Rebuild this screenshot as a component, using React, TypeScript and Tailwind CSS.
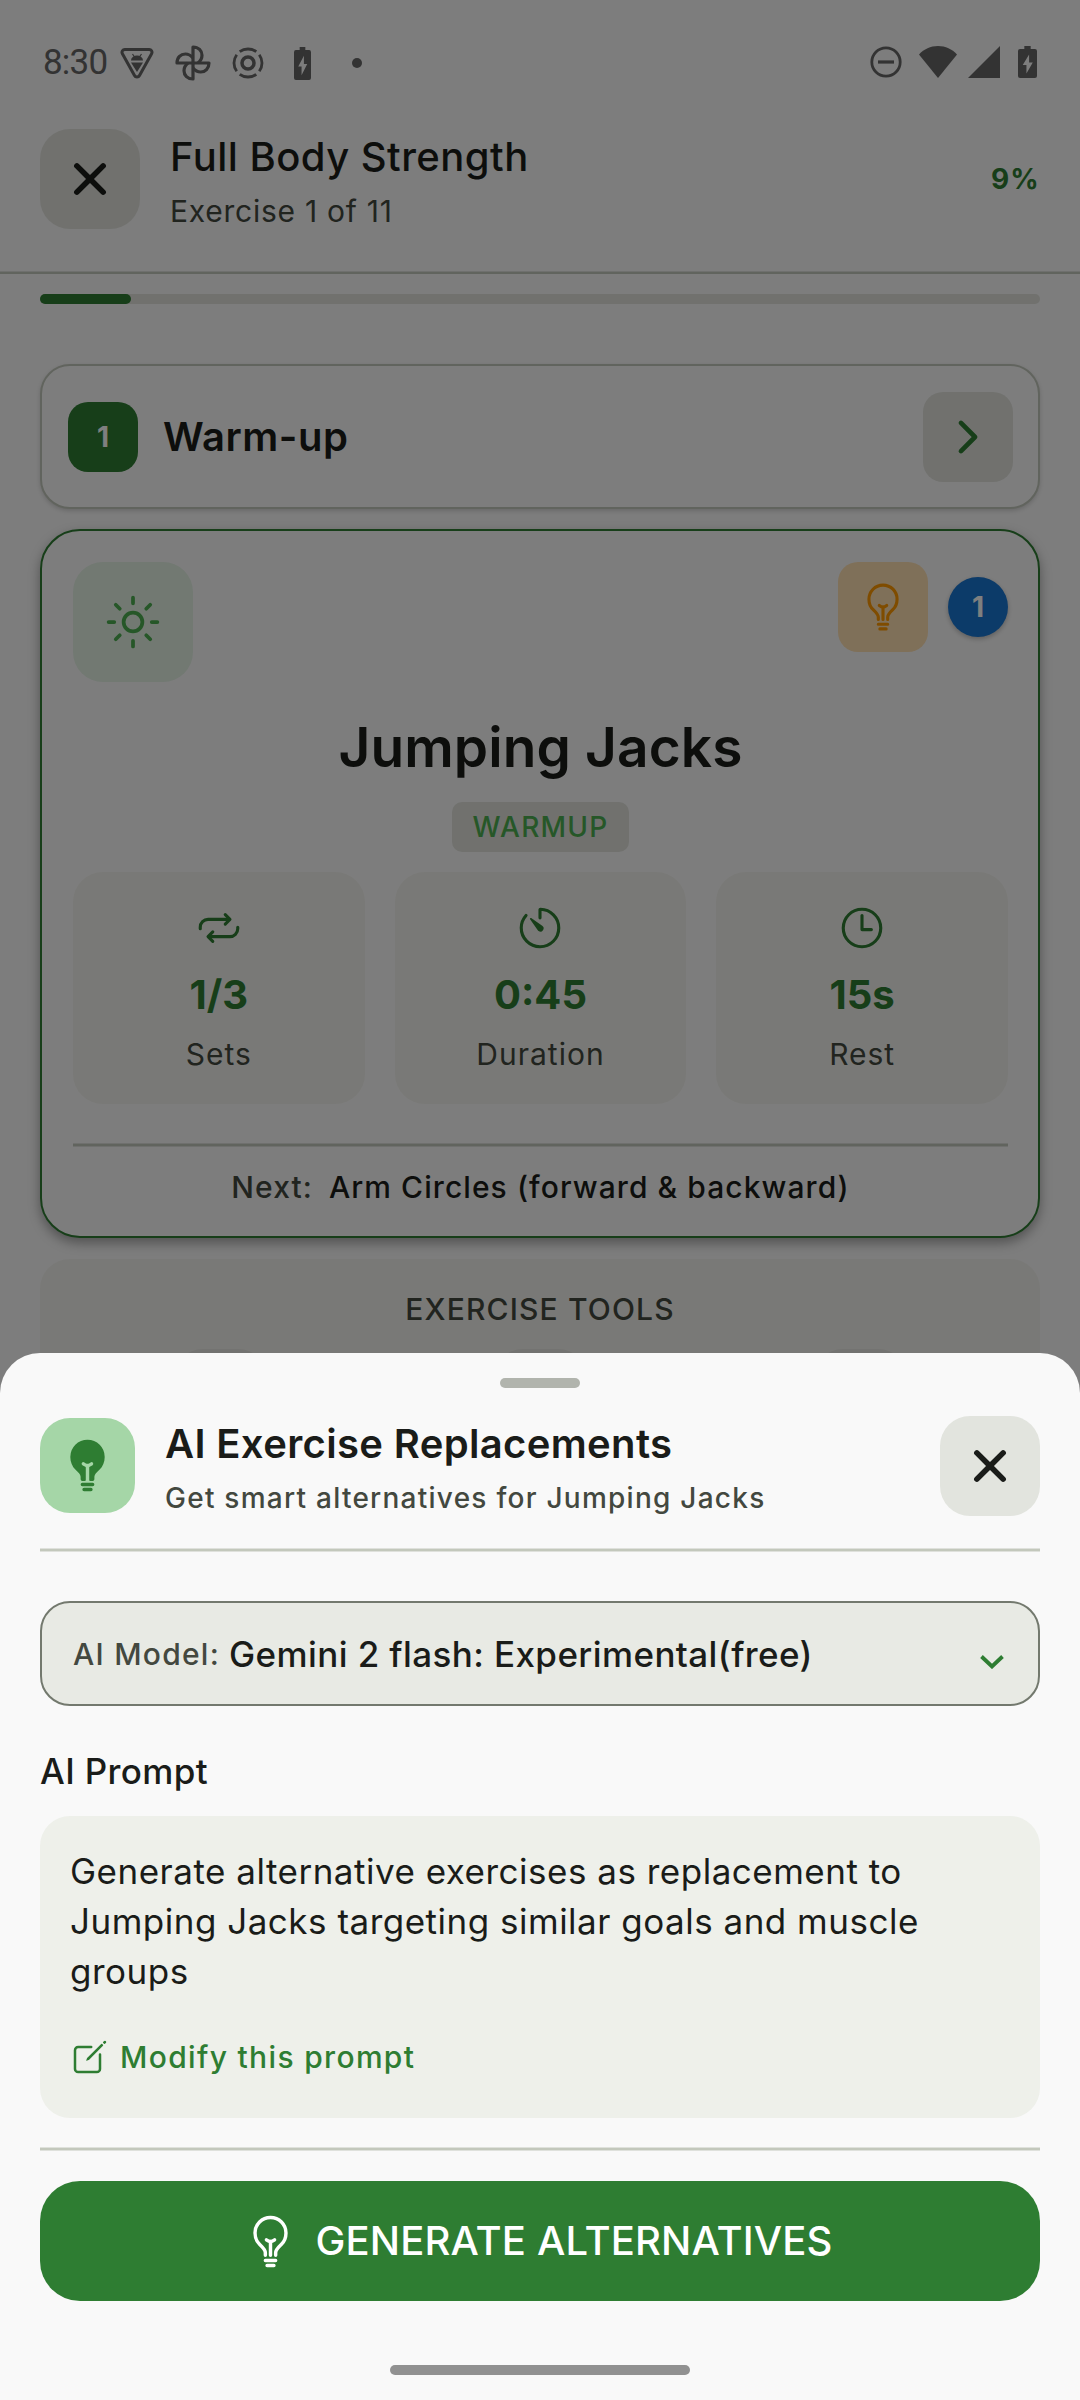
import React from 'react';
import {
  IoBulb,
  IoBulbOutline,
  IoChevronForward,
  IoClose,
  IoCreateOutline,
  IoRepeatOutline,
  IoSunnyOutline,
  IoTimeOutline,
  IoTimerOutline,
} from 'react-icons/io5';

const stats = [
  { icon: IoRepeatOutline, value: '1/3', label: 'Sets' },
  { icon: IoTimerOutline, value: '0:45', label: 'Duration' },
  { icon: IoTimeOutline, value: '15s', label: 'Rest' },
];

const BatteryIcon = ({ className }: { className: string }) => (
  <svg viewBox="0 0 18 32" preserveAspectRatio="none" className={className} fill="currentColor">
    <path fillRule="evenodd" d="M6 0h6v3h4a2 2 0 0 1 2 2v25a2 2 0 0 1-2 2H2a2 2 0 0 1-2-2V5a2 2 0 0 1 2-2h4V0zm4.5 8.500L4.500 19h3.500v8.500L14 16.500h-3.500v-8z" />
  </svg>
);

const StatusBar = () => (
  <div className="h-[99px] pt-[40px] pl-[43px] pr-[43px] flex items-start justify-between text-[#666666]">
    <div className="flex items-center h-[46px]">
      <span className="w-[77px] font-['Roboto'] text-[35px] leading-[46px] tracking-[-0.8px]">8:30</span>
      {/* bug shield */}
      <svg viewBox="0 0 34 32" className="w-[34px] h-[32px]">
        <path d="M5 2.500h24a2.800 2.800 0 0 1 2.600 4.200L19.500 28.500a2.800 2.800 0 0 1-5 0L2.400 6.700A2.800 2.800 0 0 1 5 2.500z" fill="none" stroke="currentColor" strokeWidth="3" />
        <path d="M11 13.500a6 5 0 0 1 12 0zM11 15.500h12L17 25z" fill="currentColor" />
        <path d="M12.500 7l2 3M21.500 7l-2 3" stroke="currentColor" strokeWidth="1.200" />
      </svg>
      {/* pinwheel */}
      <svg viewBox="0 0 36 36" className="w-[36px] h-[36px] ml-[21px]" fill="none" stroke="currentColor" strokeWidth="3.200" strokeLinejoin="round">
        {[0, 90, 180, 270].map(a => (
          <path key={a} transform={`rotate(${a} 18 18)`} d="M18 18V2c5.500 0 9 3.800 9 8.300 0 3-1.500 5.700-4 7.700" />
        ))}
      </svg>
      {/* target */}
      <svg viewBox="0 0 32 32" className="w-[32px] h-[32px] ml-[21px]" fill="none" stroke="currentColor" strokeWidth="3">
        <circle cx="16" cy="16" r="6" strokeWidth="3.500" />
        <circle cx="16" cy="16" r="14" strokeWidth="2.800" pathLength="80" strokeDasharray="16 4" strokeDashoffset="-2" transform="rotate(45 16 16)" />
      </svg>
      <BatteryIcon className="w-[17px] h-[33px] ml-[30px]" />
      <span className="w-[10px] h-[10px] rounded-full bg-[#666666] ml-[41px]" />
    </div>
    <div className="flex items-center h-[44px]">
      <svg viewBox="0 0 32 32" className="w-[32px] h-[32px]" fill="none" stroke="currentColor" strokeWidth="2.800">
        <circle cx="16" cy="16" r="14.200" />
        <path d="M8 16h16" strokeWidth="3.200" />
      </svg>
      <svg viewBox="0 0 38 32" className="w-[38px] h-[32px] ml-[17px]" fill="currentColor">
        <path d="M19 32L0 8.500C5 3 11.500 0 19 0s14 3 19 8.500z" />
      </svg>
      <svg viewBox="0 0 32 32" className="w-[32px] h-[32px] ml-[11px]" fill="currentColor">
        <path d="M32 0v32H0z" />
      </svg>
      <BatteryIcon className="w-[19px] h-[32px] ml-[18px]" />
    </div>
  </div>
);

const WorkoutScreen = () => (
  <div className="h-full bg-[#fafafa]">
    <StatusBar />

    {/* Header */}
    <div className="h-[172px] pt-[30px] px-[40px] flex items-start">
      <button className="w-[100px] h-[100px] rounded-[30px] bg-[#e2e3dd] flex items-center justify-center">
        <IoClose className="w-[60px] h-[60px]" />
      </button>
      <div className="ml-[30px] mt-[8px] flex-1">
        <h1 className="text-[40px] leading-[40px] font-medium tracking-[0.46px]">Full Body Strength</h1>
        <p className="mt-[19px] text-[30px] leading-[30px] tracking-[0.75px] text-[#43483f]">Exercise 1 of 11</p>
      </div>
      <span className="h-[100px] leading-[100px] text-[28px] font-bold tracking-[1.25px] text-[#2e7d32]">9%</span>
    </div>
    <div className="h-[3px] bg-[#c3c8bc] border-t border-[#dfe1dc]" />

    <div className="mt-[20px] mx-[40px] h-[10px] rounded-full bg-[#e2e3dd]">
      <div className="h-full rounded-full bg-[#2e7d32]" style={{ width: `${100 / 11}%` }} />
    </div>

    {/* Section card */}
    <div className="mt-[60px] mx-[40px] h-[145px] pl-[26px] pr-[25px] rounded-[30px] border-2 border-[#c3c8bc] bg-[#fbfbfb] flex items-center shadow-[0_2px_4px_rgba(0,0,0,0.16)]">
      <div className="w-[70px] h-[70px] rounded-[20px] bg-[#2e7d32] text-white text-[28px] font-bold flex items-center justify-center">1</div>
      <span className="ml-[25px] flex-1 text-[40px] font-semibold tracking-[0.5px] pt-px">Warm-up</span>
      <button className="w-[90px] h-[90px] rounded-[20px] bg-[#e2e3dd] text-[#2e7d32] flex items-center justify-center">
        <IoChevronForward className="w-[50px] h-[50px]" />
      </button>
    </div>

    {/* Exercise card */}
    <div className="mt-[20px] mx-[40px] h-[709px] pl-[31px] pr-[30px] pt-[31px] rounded-[40px] border-2 border-[#2e7d32] bg-[#fbfbfb] shadow-[0_5px_12px_rgba(0,0,0,0.35)]">
      <div className="flex items-start justify-between">
        <div className="w-[120px] h-[120px] rounded-[30px] bg-[#e4f2e5] text-[#4caf50] flex items-center justify-center">
          <IoSunnyOutline className="w-[60px] h-[60px]" />
        </div>
        <div className="flex items-center gap-[20px]">
          <button className="w-[90px] h-[90px] rounded-[20px] bg-[#ffe0b2] text-[#ff9800] flex items-center justify-center">
            <IoBulbOutline className="w-[50px] h-[50px]" />
          </button>
          <div className="w-[60px] h-[60px] rounded-full bg-[#1976d2] text-white text-[28px] font-bold flex items-center justify-center shadow-[0_2px_5px_rgba(0,0,0,0.25)]">1</div>
        </div>
      </div>

      <div className="flex flex-col items-center">
        <h2 className="mt-[30px] text-[55px] leading-[70px] font-semibold tracking-[0.1px]">Jumping Jacks</h2>
        <span className="mt-[20px] h-[50px] px-[20px] rounded-[10px] bg-[#e2e3dd] text-[28px] leading-[50px] font-medium tracking-[1.25px] text-[#4caf50]">WARMUP</span>
      </div>

      <div className="mt-[20px] grid grid-cols-3 gap-[30px]">
        {stats.map(({ icon: Icon, value, label }) => (
          <div key={label} className="h-[232px] pt-[31px] rounded-[30px] bg-[#f3f3ee] flex flex-col items-center">
            <Icon className="w-[50px] h-[50px] text-[#2e7d32]" />
            <span className="mt-[17px] text-[40px] leading-[50px] font-bold text-[#2e7d32]">{value}</span>
            <span className="mt-[14px] text-[30px] leading-[40px] tracking-[1px] text-[#43483f]">{label}</span>
          </div>
        ))}
      </div>

      <div className="mt-[39px] h-[4px] bg-[#c3c8bc] border-y border-[#dfe1dc]" />
      <p className="mt-[20px] text-center text-[30px] leading-[40px] font-medium tracking-[1.07px]">
        <span className="text-[#43483f] mr-[16px]">Next:</span>
        <span>Arm Circles (forward &amp; backward)</span>
      </p>
    </div>

    {/* Tools card, mostly hidden by the sheet */}
    <div className="mt-[21px] mx-[40px] h-[400px] pt-[30px] rounded-[30px] bg-[#f3f3ee]">
      <p className="text-center text-[30px] leading-[40px] font-medium tracking-[1.15px] text-[#43483f]">EXERCISE TOOLS</p>
      <div className="mt-[20px] px-[20px] grid grid-cols-3">
        {['demo', 'form', 'notes'].map(tool => (
          <div key={tool} className="w-[95px] h-[95px] rounded-[30px] bg-[#e6e6e2] justify-self-center" />
        ))}
      </div>
    </div>
  </div>
);

const ReplacementSheet = () => (
  <div className="absolute bottom-0 left-0 right-0 h-[1047px] px-[40px] rounded-t-[40px] bg-[#f9f9f9] flex flex-col">
    <div className="mt-[25px] w-[80px] h-[10px] rounded-full bg-[#b1b4ad] self-center" />

    <div className="mt-[28px] h-[100px] flex items-start">
      <div className="mt-[2px] w-[95px] h-[95px] rounded-[30px] bg-[#a5d6a7] text-[#2e7d32] flex items-center justify-center">
        <IoBulb className="w-[55px] h-[55px]" />
      </div>
      <div className="ml-[30px] mt-[3px] flex-1">
        <h2 className="text-[40px] leading-[50px] font-semibold tracking-[0.35px]">AI Exercise Replacements</h2>
        <p className="mt-[9px] text-[28px] leading-[40px] font-medium tracking-[1.25px] text-[#43483f]">Get smart alternatives for Jumping Jacks</p>
      </div>
      <button className="w-[100px] h-[100px] rounded-[30px] bg-[#e2e4de] flex items-center justify-center">
        <IoClose className="w-[60px] h-[60px]" />
      </button>
    </div>

    <div className="mt-[32px] h-[4px] bg-[#c3c8bc] border-y border-[#dfe1dc]" />

    <button className="mt-[49px] h-[105px] pl-[31px] pr-[34px] rounded-[30px] border-2 border-[#73796e] bg-[#e8eae4] flex items-center text-left">
      <span className="pt-px text-[30px] font-medium tracking-[1.25px] text-[#43483f]">AI Model:</span>
      <span className="ml-[9px] pt-[2px] flex-1 text-[35px] font-medium tracking-[0.4px]">Gemini 2 flash: Experimental(free)</span>
      <svg viewBox="0 0 24 14" className="w-[24px] h-[14px] mt-[17px]" fill="none" stroke="#2e7d32" strokeWidth="3.800">
        <path d="M1.500 1.500L12 11.500 22.500 1.500" />
      </svg>
    </button>

    <h3 className="mt-[40px] text-[35px] leading-[50px] font-medium tracking-[0.35px]">AI Prompt</h3>

    <div className="mt-[20px] h-[302px] p-[30px] rounded-[30px] bg-[#eef0ea]">
      <p className="text-[35px] leading-[50px] tracking-[0.5px]">
        Generate alternative exercises as replacement to Jumping Jacks targeting similar goals and muscle groups
      </p>
      <button className="mt-[41px] flex items-center text-[#2e7d32]">
        <IoCreateOutline className="w-[40px] h-[40px]" />
        <span className="ml-[10px] text-[30px] leading-[40px] font-medium tracking-[1.33px]">Modify this prompt</span>
      </button>
    </div>

    <div className="mt-[29px] h-[4px] bg-[#c3c8bc] border-y border-[#dfe1dc]" />

    <button className="mt-[30px] h-[120px] pr-[4px] rounded-[40px] bg-[#2e7d32] text-white flex items-center justify-center">
      <IoBulbOutline className="w-[55px] h-[55px]" />
      <span className="ml-[17px] text-[40px] font-medium tracking-[0.15px]">GENERATE ALTERNATIVES</span>
    </button>

    <div className="mt-[64px] w-[300px] h-[10px] rounded-full bg-[#919191] self-center" />
  </div>
);

const App: React.FC = () => {
  return (
    <div className="relative w-[1080px] h-[2400px] overflow-hidden font-['Inter',sans-serif] text-[#1a1c19]">
      <WorkoutScreen />
      <div className="absolute inset-0 bg-black/50" />
      <ReplacementSheet />
    </div>
  );
};

export default App;
